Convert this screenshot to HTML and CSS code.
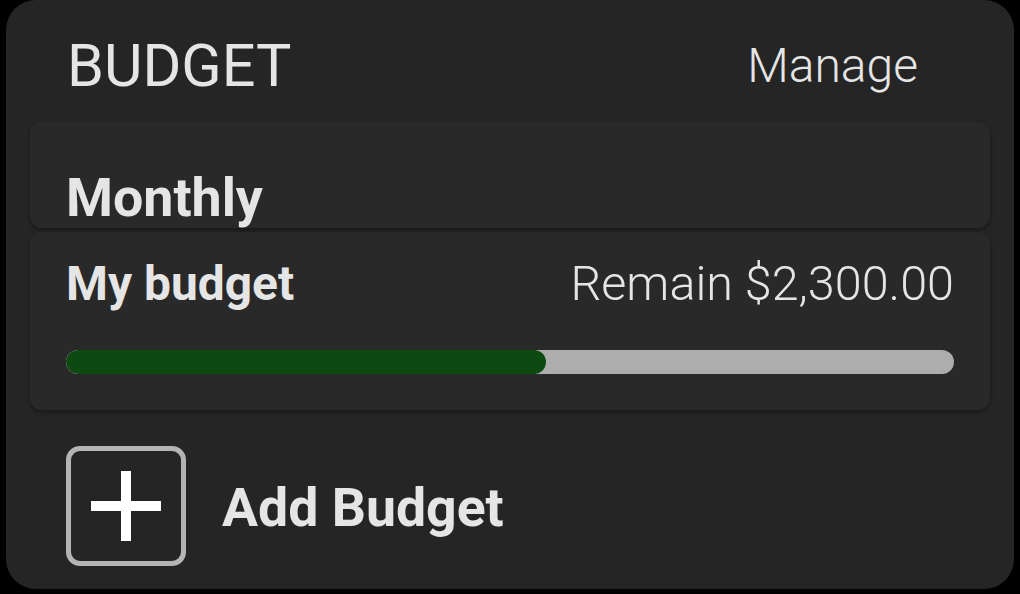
FILE: index.html
```html
<!DOCTYPE html>
<html>
<head>
<meta charset="utf-8">
<link rel="stylesheet" href="styles.css">
</head>
<body>
<div class="widget">
  <div class="header">
    <span class="title">BUDGET</span>
    <span class="manage">Manage</span>
  </div>
  <div class="card period">
    <span class="period-label">Monthly</span>
  </div>
  <div class="card budget">
    <div class="budget-row">
      <span class="budget-name">My budget</span>
      <span class="budget-remain">Remain $2,300.00</span>
    </div>
    <div class="track"><div class="fill" style="width:54.05%"></div></div>
  </div>
  <div class="add-row">
    <div class="add-box">
      <svg width="70" height="70" viewBox="0 0 70 70"><rect x="0" y="30" width="70" height="10" fill="#ffffff"/><rect x="30" y="0" width="10" height="70" fill="#ffffff"/></svg>
    </div>
    <span class="add-label">Add Budget</span>
  </div>
</div>
</body>
</html>
```
FILE: styles.css
```css
html, body {
  margin: 0;
  padding: 0;
  background: #000000;
}
body {
  font-family: Roboto, "Liberation Sans", sans-serif;
  color: #e5e5e5;
}
.widget {
  margin-left: 6px;
  width: 1008px;
  height: 589px;
  box-sizing: border-box;
  padding: 0 24px 23px;
  background: #252525;
  border-radius: 30px;
  display: flex;
  flex-direction: column;
}
.header {
  height: 122px;
  box-sizing: border-box;
  padding: 9px 72px 0 37px;
  display: flex;
  align-items: center;
  justify-content: space-between;
}
.title {
  font-size: 59.3px;
  font-weight: 400;
  line-height: 68px;
}
.manage {
  font-size: 48px;
  font-weight: 300;
  line-height: 56px;
}
.card {
  background: #292929;
  border-radius: 12px;
  box-shadow: 0 2px 4px rgba(0, 0, 0, 0.35);
}
.period {
  height: 106px;
  box-sizing: border-box;
  padding: 0 36px;
  display: flex;
  align-items: flex-end;
  margin-bottom: 4px;
}
.period-label {
  font-size: 53.7px;
  font-weight: 700;
  line-height: 61px;
}
.budget {
  height: 178px;
  box-sizing: border-box;
  padding: 24px 36px 0;
}
.budget-row {
  display: flex;
  justify-content: space-between;
  align-items: baseline;
  line-height: 56px;
  height: 56px;
}
.budget-name {
  font-size: 47.9px;
  font-weight: 700;
}
.budget-remain {
  font-size: 48.5px;
  font-weight: 300;
}
.track {
  margin-top: 38px;
  height: 24px;
  border-radius: 12px;
  background: #adadad;
  overflow: hidden;
}
.fill {
  height: 100%;
  background: #0c4a12;
  border-radius: 12px;
}
.add-row {
  margin-top: 36px;
  padding-left: 36px;
  display: flex;
  align-items: center;
  gap: 36px;
}
.add-box {
  width: 120px;
  height: 120px;
  box-sizing: border-box;
  border: 5px solid #b4b4b4;
  border-radius: 14px;
  display: flex;
  align-items: center;
  justify-content: center;
}
.add-box svg {
  display: block;
}
.add-label {
  font-size: 53.6px;
  font-weight: 700;
  line-height: 62px;
  padding-top: 4px;
}
```
